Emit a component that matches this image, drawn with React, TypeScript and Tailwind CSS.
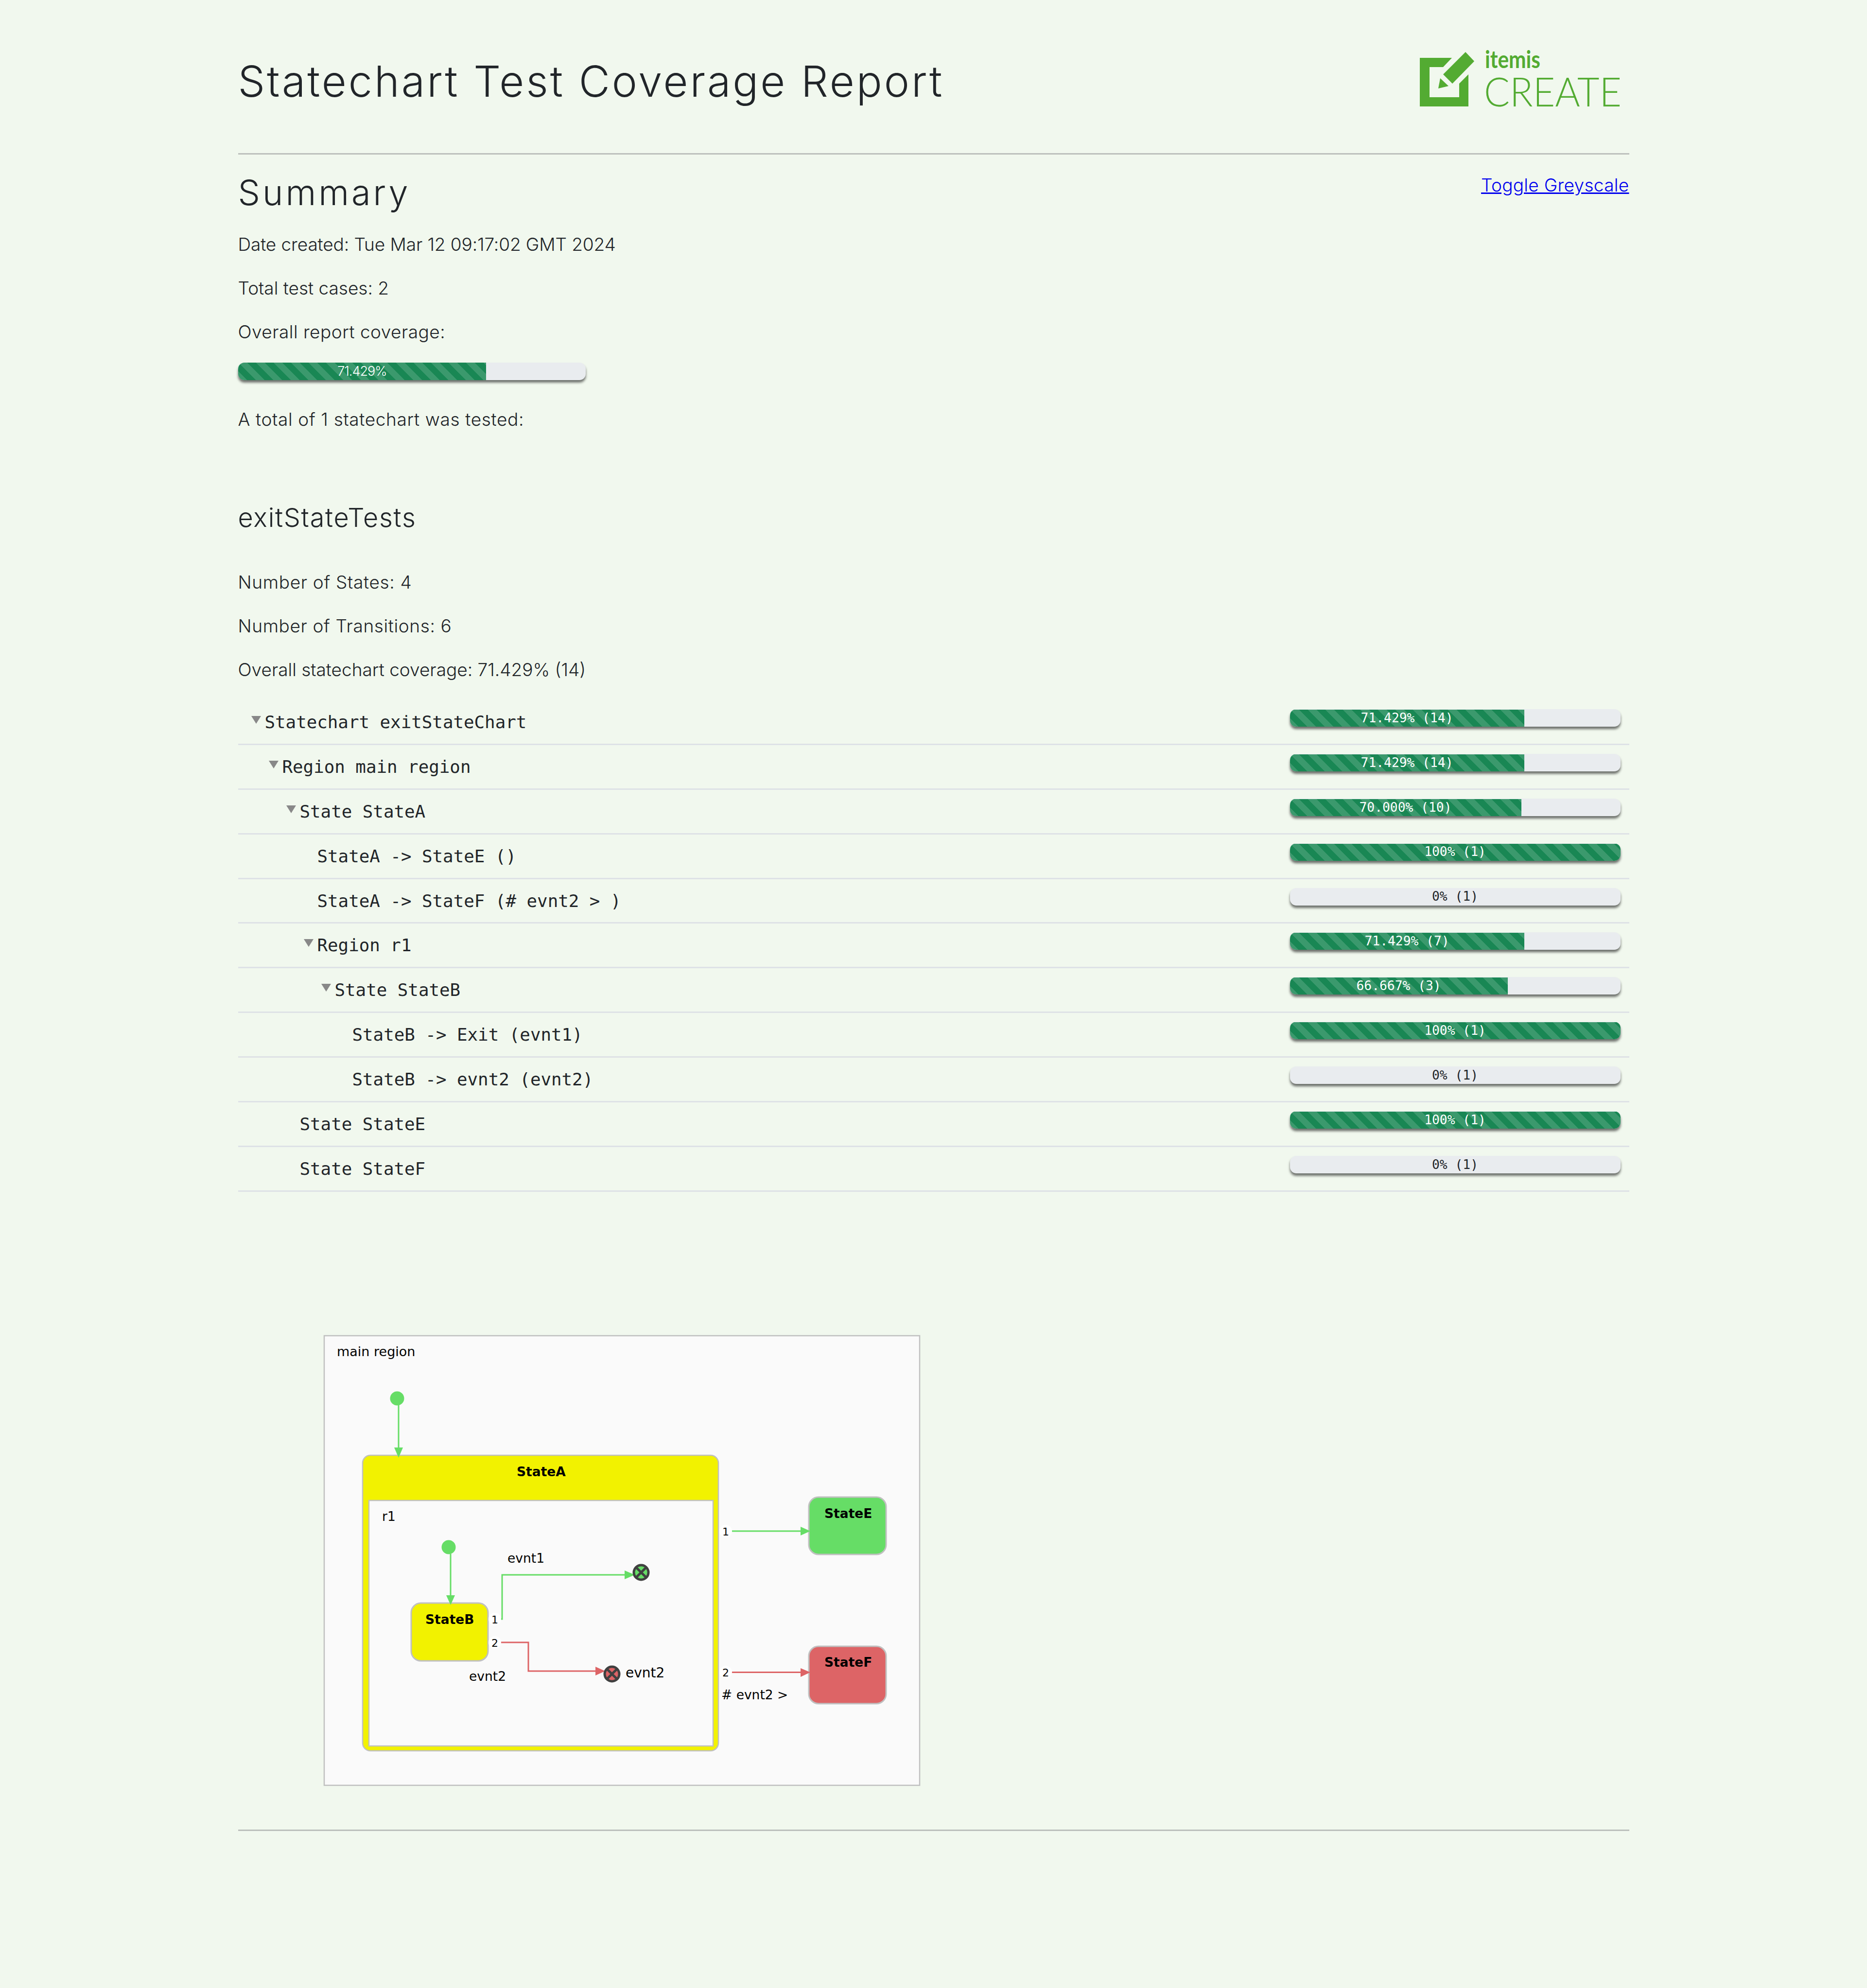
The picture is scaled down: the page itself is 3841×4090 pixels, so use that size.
const rows = [
  { level: 0, toggle: true, label: "Statechart exitStateChart", pct: 70.9, text: "71.429% (14)" },
  { level: 1, toggle: true, label: "Region main region", pct: 70.9, text: "71.429% (14)" },
  { level: 2, toggle: true, label: "State StateA", pct: 70, text: "70.000% (10)" },
  { level: 3, toggle: false, label: "StateA -> StateE ()", pct: 100, text: "100% (1)" },
  { level: 3, toggle: false, label: "StateA -> StateF (# evnt2 > )", pct: 0, text: "0% (1)" },
  { level: 3, toggle: true, label: "Region r1", pct: 70.9, text: "71.429% (7)" },
  { level: 4, toggle: true, label: "State StateB", pct: 65.9, text: "66.667% (3)" },
  { level: 5, toggle: false, label: "StateB -> Exit (evnt1)", pct: 100, text: "100% (1)" },
  { level: 5, toggle: false, label: "StateB -> evnt2 (evnt2)", pct: 0, text: "0% (1)" },
  { level: 2, toggle: false, label: "State StateE", pct: 100, text: "100% (1)" },
  { level: 2, toggle: false, label: "State StateF", pct: 0, text: "0% (1)" },
];

const Bar = ({ pct, text, mono, width }: { pct: number; text: string; mono?: boolean; width: string }) => (
  <div
    className={`relative flex h-[36px] overflow-hidden rounded-[13px] bg-[#e9ecef] shadow-[0_5px_5px_rgba(0,0,0,0.55)] ${width} ${
      mono ? "pt-px font-['DejaVu_Sans_Mono',monospace] text-[26.3px] font-normal" : "text-[27px] tracking-[-1px]"
    }`}
  >
    {pct > 0 ? (
      <div
        className="flex h-full items-center justify-center bg-[#198754] bg-[linear-gradient(45deg,rgba(255,255,255,.15)_25%,transparent_25%,transparent_50%,rgba(255,255,255,.15)_50%,rgba(255,255,255,.15)_75%,transparent_75%,transparent)] bg-[length:36px_36px] whitespace-pre text-white"
        style={{ width: `${pct}%` }}
      >
        {text}
      </div>
    ) : (
      <div className="flex h-full w-full items-center justify-center whitespace-pre text-[#212529]">{text}</div>
    )}
  </div>
);

const Logo = () => (
  <svg className="mt-[70px] h-[190px] w-[431px]" viewBox="2921 70 431 190">
    <path
      fill="#53ab32"
      d="M2921 119H2987L2969 138H2941V200H3002V172L3021 153V219H2921Z"
    />
    <path fill="#53ab32" d="M3015 107L3033 126L2988 172L2969 153Z" />
    <path fill="#53ab32" d="M2963 161L2980 177L2959 182Z" />
    <text
      x="3055"
      y="140"
      fill="#53ab32"
      fontFamily="Lato, sans-serif"
      fontWeight="700"
      fontSize="49"
      textLength="114"
      lengthAdjust="spacingAndGlyphs"
    >
      itemis
    </text>
    <text
      x="3053"
      y="219"
      fill="#53ab32"
      fontFamily="Lato, sans-serif"
      fontWeight="300"
      fontSize="82"
      textLength="283"
      lengthAdjust="spacingAndGlyphs"
    >
      CREATE
    </text>
  </svg>
);

const green = "#66dd66";
const red = "#dd6466";

const ExitNode = ({ cx, cy, fill }: { cx: number; cy: number; fill: string }) => (
  <g>
    <circle cx={cx} cy={cy} r="15" fill={fill} stroke="#404040" strokeWidth="5" />
    <path d={`M${cx - 10} ${cy - 10}L${cx + 10} ${cy + 10}M${cx + 10} ${cy - 10}L${cx - 10} ${cy + 10}`} stroke="#404040" strokeWidth="5" />
  </g>
);

const Label = ({ x, y, children, bold, size }: { x: number; y: number; children: string; bold?: boolean; size?: number }) => (
  <text x={x} y={y} fontSize={size ?? 26.5} fontWeight={bold ? 700 : 400} fill="#000" xmlSpace="preserve">
    {children}
  </text>
);

const Num = ({ x, y, children }: { x: number; y: number; children: string }) => (
  <g>
    <circle cx={x} cy={y - 9} r="13" fill="#fff" />
    <text x={x} y={y} fontSize="22" fontWeight="400" textAnchor="middle" fill="#000">
      {children}
    </text>
  </g>
);

const Diagram = () => (
  <svg
    className="mt-[294px] ml-[175px] block h-[930px] w-[1230px] font-['DejaVu_Sans',sans-serif]"
    viewBox="665 2745 1230 930"
  >
    <rect x="667" y="2747" width="1225" height="925" fill="#fafafa" stroke="#c0c0c0" strokeWidth="2.5" />
    <Label x={693} y={2789} size={27}>main region</Label>

    <circle cx="817" cy="2876" r="14.5" fill={green} />
    <path d="M820 2890V2980" stroke={green} strokeWidth="3" />

    <rect x="746" y="2993" width="732" height="608" rx="16" fill="#f2f200" stroke="#c0c0c0" strokeWidth="2.5" />
    <rect x="759" y="3086" width="708" height="505" fill="#fafafa" stroke="#c0c0c0" strokeWidth="2.5" />
    <path d="M811 2977H829L820 2998Z" fill={green} />
    <Label x={1063} y={3036} bold>StateA</Label>
    <Label x={786} y={3128}>r1</Label>

    <circle cx="923" cy="3182" r="14.5" fill={green} />
    <path d="M927 3196V3285" stroke={green} strokeWidth="3" />
    <rect x="846" y="3297" width="158" height="119" rx="20" fill="#f2f200" stroke="#c0c0c0" strokeWidth="3" />
    <path d="M918 3281H936L927 3301Z" fill={green} />
    <Label x={875} y={3340} bold>StateB</Label>

    <path d="M1028 3330H1033V3239H1290" fill="none" stroke={green} strokeWidth="3" />
    <path d="M1285 3230V3248L1306 3239Z" fill={green} />
    <ExitNode cx={1319} cy={3234} fill={green} />
    <Label x={1044} y={3214}>evnt1</Label>
    <Num x={1018} y={3339}>1</Num>

    <path d="M1028 3378H1087V3437H1230" fill="none" stroke={red} strokeWidth="3" />
    <path d="M1225 3428V3446L1245 3437Z" fill={red} />
    <ExitNode cx={1259} cy={3443} fill={red} />
    <Label x={1287} y={3450} size={28}>evnt2</Label>
    <Label x={965} y={3457}>evnt2</Label>
    <Num x={1018} y={3387}>2</Num>

    <path d="M1502 3149H1650" stroke={green} strokeWidth="3" />
    <Num x={1493} y={3158}>1</Num>
    <rect x="1664" y="3079" width="159" height="118" rx="20" fill={green} stroke="#c0c0c0" strokeWidth="3" />
    <path d="M1647 3140V3158L1667 3149Z" fill={green} />
    <Label x={1696} y={3122} bold>StateE</Label>

    <path d="M1502 3439.5H1650" stroke={red} strokeWidth="3" />
    <Num x={1493} y={3448}>2</Num>
    <Label x={1484} y={3495}># evnt2 &gt;</Label>
    <rect x="1664" y="3386" width="159" height="118" rx="20" fill={red} stroke="#c0c0c0" strokeWidth="3" />
    <path d="M1647 3431V3449L1667 3439.5Z" fill={red} />
    <Label x={1696} y={3428} bold>StateF</Label>
  </svg>
);

const Para = ({ children, className }: { children: string; className?: string }) => (
  <p className={`h-[60px] text-[37px] leading-[60px] ${className ?? ""}`}>{children}</p>
);

const App = () => {
  return (
    <div className="min-h-[4090px] bg-[#f1f8ee] font-['Inter',sans-serif] font-light text-[#212529]">
      <div className="mx-auto w-[2862px]">
        <div className="flex h-[315px] items-start justify-between">
          <h1 className="mt-[112px] text-[88px] leading-[110px] font-light tracking-[4px]">
            Statechart Test Coverage Report
          </h1>
          <Logo />
        </div>
        <hr className="border-t-[3px] border-[#bcc0bc]" />

        <div className="mt-[27px] flex items-start justify-between">
          <h2 className="mt-px text-[72px] leading-[100px] font-light tracking-[5px]">Summary</h2>
          <a href="#" className="mt-[6px] text-[37px] leading-[60px] tracking-[0.3px] text-[#0000ee] underline">
            Toggle Greyscale
          </a>
        </div>

        <div className="mt-[27px] flex flex-col gap-[30px]">
          <Para className="tracking-[-0.1px]">Date created: Tue Mar 12 09:17:02 GMT 2024</Para>
          <Para>Total test cases: 2</Para>
          <Para className="tracking-[0.47px]">Overall report coverage:</Para>
        </div>
        <div className="mt-[33px]">
          <Bar pct={71.429} text="71.429%" width="w-[715px]" />
        </div>
        <Para className="mt-[51px] tracking-[0.65px]">A total of 1 statechart was tested:</Para>

        <h3 className="mt-[136px] text-[54px] leading-[72px] font-light tracking-[1.7px]">exitStateTests</h3>

        <div className="mt-[67px] flex flex-col gap-[30px]">
          <Para className="tracking-[0.68px]">Number of States: 4</Para>
          <Para className="tracking-[0.63px]">Number of Transitions: 6</Para>
          <Para>Overall statechart coverage: 71.429% (14)</Para>
        </div>

        <div className="mt-[33px] font-['DejaVu_Sans_Mono',monospace] text-[35.8px] font-normal">
          {rows.map((row) => (
            <div key={row.label} className="relative flex h-[91.9px] items-start justify-between border-b-[3px] border-[#dee2e6]">
              <div
                className="relative mt-[23px] whitespace-pre leading-[44px]"
                style={{ marginLeft: 55 + row.level * 36 }}
              >
                {row.toggle && (
                  <span className="absolute top-[9px] left-[-28px] h-0 w-0 border-x-[10px] border-t-[16px] border-x-transparent border-t-[#888888]" />
                )}
                {row.label}
              </div>
              <div className="mt-[18px] mr-[18px]">
                <Bar pct={row.pct} text={row.text} mono width="w-[680px]" />
              </div>
            </div>
          ))}
        </div>

        <Diagram />

        <hr className="mt-[88px] border-t-[3px] border-[#bcc0bc]" />
      </div>
    </div>
  );
};

export default App;
